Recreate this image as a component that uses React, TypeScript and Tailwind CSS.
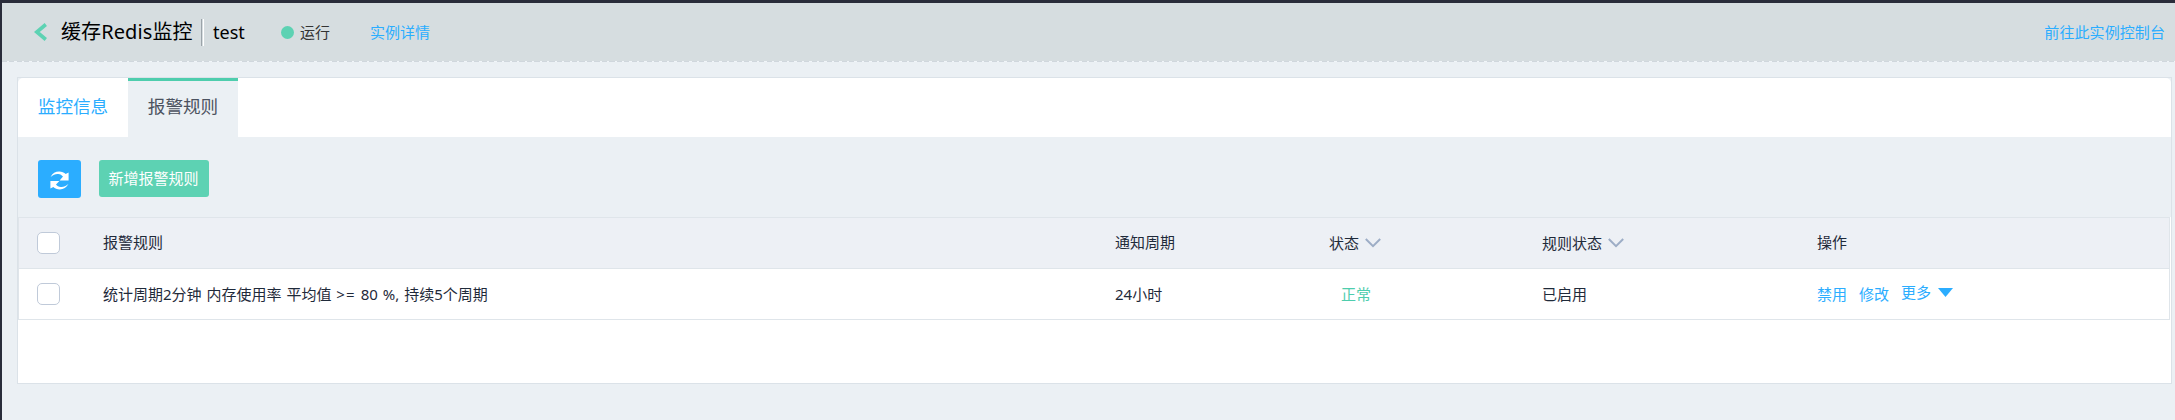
import type { ReactNode } from "react";

const columns =
  "grid grid-cols-[84px_1012px_214px_213px_275px_1fr] items-center pr-4";

function Checkbox() {
  return (
    <span className="ml-[18px] block h-[22px] w-[23px] rounded-[5px] border border-[#c0cad9] bg-white" />
  );
}

function SortHeader({ children }: { children: ReactNode }) {
  return (
    <div className="flex items-center gap-[6px] pt-px">
      <span>{children}</span>
      <svg width="16" height="10" viewBox="0 0 16 10" fill="none" stroke="#9dadc6" strokeWidth="2">
        <path d="M0.8 1L8 8.2L15.2 1" />
      </svg>
    </div>
  );
}

function RefreshIcon() {
  return (
    <svg width="19" height="19" viewBox="0 0 19 19" fill="#fff">
      <path d="M0.600 6C2.400 2.400 5.500 0.600 9.200 0.600C11.800 0.600 14.200 1.500 15.700 3L18.600 1.600V9.400H9.600L13 5.600C11.900 4.200 10.300 3.200 8.200 3C5.600 2.700 3.200 3.900 0.600 6Z" />
      <path d="M18.400 13C16.600 16.600 13.500 18.400 9.800 18.400C7.200 18.400 4.800 17.500 3.300 16L0.400 17.400V9.900H9.400L6 13.400C7.100 14.800 8.700 15.800 10.800 16C13.400 16.300 15.800 15.100 18.400 13Z" />
    </svg>
  );
}

export default function App() {
  return (
    <div className="h-[420px] w-[2175px] overflow-hidden bg-[#292c3a] pt-[3px] pl-[2px] font-['Noto_Sans','Noto_Sans_CJK_SC',sans-serif] text-[15px] leading-[20px] text-[#1f2a3a]">
      <div className="h-[417px] bg-[#ebf0f4]">
        <header className="flex h-[58px] items-center bg-[#d6dde0] pr-[10px] pl-[32px]">
          <svg width="13" height="18" viewBox="0 0 13 18" fill="none" stroke="#5dd2b3" strokeWidth="3.6">
            <path d="M11.8 1.5L2.8 9L11.8 16.500" />
          </svg>
          <h1 className="ml-[14px] w-[132px] text-[20px] leading-[28px] tracking-[0.1px] whitespace-nowrap text-black">缓存Redis监控</h1>
          <span className="ml-2 h-[27px] w-[3px] border-r border-l border-r-white border-l-[#9ba3a9]" />
          <span className="ml-[9px] w-[31px] text-[18px] text-black">test</span>
          <span className="ml-[37px] size-[13px] rounded-full bg-[#5dd2b3]" />
          <span className="ml-[6px] pb-px text-[#333]">运行</span>
          <a className="ml-[40px] pb-px text-[#2badff]">实例详情</a>
          <a className="ml-auto pb-px tracking-[0.08px] text-[#2badff]">前往此实例控制台</a>
        </header>
        <div className="h-px bg-[repeating-linear-gradient(90deg,#d0d7dd_0px,#d0d7dd_5px,#f1f5f9_5px,#f1f5f9_7.500px)]" />

        <main className="mt-[15px] ml-[15px] h-[307px] w-[2155px] border border-[#dbe2e8] bg-white">
          <div className="bg-[#ebf0f4]">
            <nav className="flex h-[59px] rounded-t-[5px] bg-white text-[17.600px]">
              <a className="flex w-[110px] items-center justify-center pb-[3px] text-[#2badff]">监控信息</a>
              <a className="flex w-[110px] items-center justify-center border-t-[3px] border-[#4ecdad] bg-[#ebf0f4] pb-[6px] text-[#4b5260]">报警规则</a>
            </nav>
          </div>

          <div className="flex h-[80px] items-start gap-[18px] bg-[#ebf0f4] pt-[23px] pl-5">
            <button className="flex h-[38px] w-[43px] items-center justify-center rounded-[3px] bg-[#2badff] pt-[2px]">
              <RefreshIcon />
            </button>
            <button className="flex h-[37px] w-[110px] items-center justify-center rounded-[3px] bg-[#5dd2b3] pr-px pb-px whitespace-nowrap text-white">新增报警规则</button>
          </div>

          <section className="mr-px border-t border-r border-l border-[#dfe5ea]">
            <div className={`${columns} h-[51px] border-b border-[#dfe5ea] bg-[#edf0f5] pb-px`}>
              <Checkbox />
              <div className="pb-px">报警规则</div>
              <div className="pb-px">通知周期</div>
              <SortHeader>状态</SortHeader>
              <SortHeader>规则状态</SortHeader>
              <div className="pb-px">操作</div>
            </div>
            <div className={`${columns} h-[51px] border-b border-[#dfe5ea] bg-white`}>
              <Checkbox />
              <div className="[word-spacing:1px]">
                统计周期2分钟 内存使用率 平均值 <span className="tracking-[1.200px]">&gt;=</span> 80 %, 持续5个周期
              </div>
              <div>24小时</div>
              <div className="pl-3 text-[#4ecdad]">正常</div>
              <div>已启用</div>
              <div className="flex gap-[12px] text-[#2badff]">
                <a>禁用</a>
                <a>修改</a>
                <a className="-mt-[2px] flex items-center gap-[7px] self-start">
                  更多
                  <svg width="15" height="9" viewBox="0 0 15 9" fill="#2badff">
                    <path d="M0 0H15L7.500 9Z" />
                  </svg>
                </a>
              </div>
            </div>
          </section>
        </main>
      </div>
    </div>
  );
}
